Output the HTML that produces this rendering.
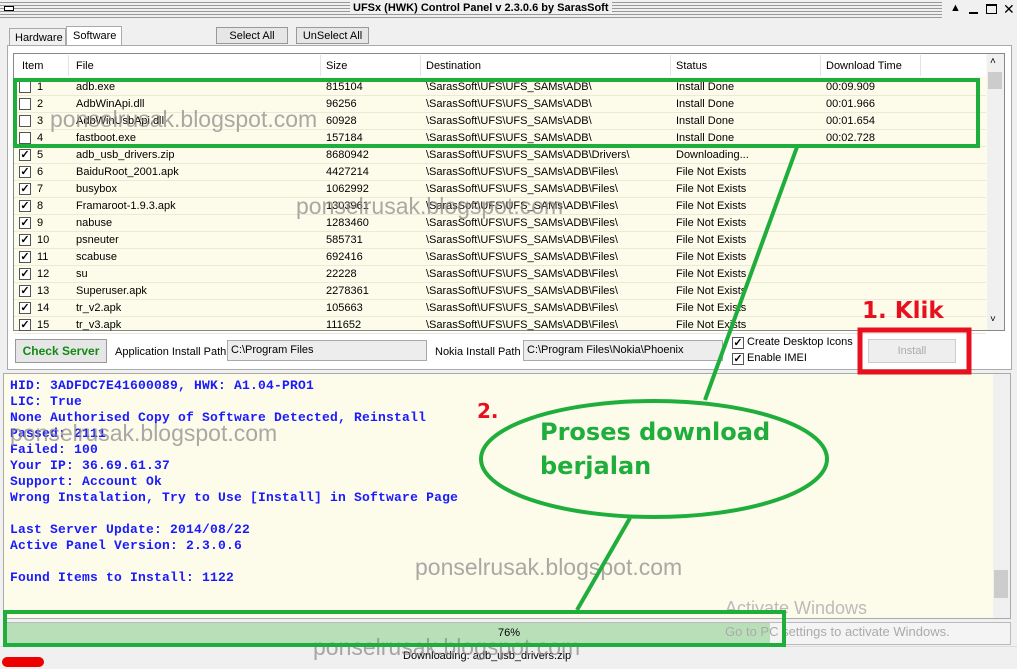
<!DOCTYPE html>
<html><head><meta charset="utf-8">
<style>
*{margin:0;padding:0;box-sizing:border-box}
body{width:1017px;height:669px;overflow:hidden;background:#f0f0f0;font-family:"Liberation Sans",sans-serif;font-size:11px;color:#000;position:relative}
.a{position:absolute;white-space:nowrap}
.cb{position:absolute;width:12px;height:12px;border:1px solid #555;background:#fff;font-size:11px;line-height:10px;text-align:center;font-weight:bold}
.btn{position:absolute;border:1px solid #999;background:#e6e6e6;text-align:center}
.log{position:absolute;left:10px;font-family:"Liberation Mono",monospace;font-weight:bold;font-size:13px;letter-spacing:0.2px;color:#1a1aff;white-space:pre}
.wm{position:absolute;color:rgba(140,140,140,.75);font-size:23px;font-family:"Liberation Sans",sans-serif;white-space:nowrap}
</style></head><body>
<div class="a" style="left:0;top:0;width:1017px;height:19px;background:repeating-linear-gradient(#f0f0f0 0 2px,#999 2px 3px);"></div>
<div class="a" style="left:4px;top:6px;width:10px;height:5px;border:1px solid #000;background:#fff"></div>
<div class="a" style="left:350px;top:2px;background:#f0f0f0;padding:0 3px;font-weight:bold;font-size:11px">UFSx (HWK) Control Panel v 2.3.0.6 by SarasSoft</div>
<div class="a" style="left:942px;top:0;width:75px;height:19px;background:#f0f0f0"></div>
<div class="a" style="left:950px;top:2px;font-size:11px">▲</div>
<div class="a" style="left:969px;top:12px;width:9px;height:2px;background:#000"></div>
<div class="a" style="left:986px;top:4px;width:11px;height:10px;border:1px solid #000;border-top-width:2px"></div>
<div class="a" style="left:1003px;top:1px;font-size:14px">✕</div>
<div class="a" style="left:9px;top:28px;width:57px;height:18px;border:1px solid #aaa;border-bottom:none;background:#f0f0f0;padding:3px 0 0 5px">Hardware</div>
<div class="a" style="left:66px;top:26px;width:56px;height:20px;border:1px solid #aaa;border-bottom:none;background:#fff;padding:3px 0 0 6px">Software</div>
<div class="btn" style="left:216px;top:27px;width:72px;height:17px;padding-top:2px">Select All</div>
<div class="btn" style="left:296px;top:27px;width:73px;height:17px;padding-top:2px">UnSelect All</div>
<div class="a" style="left:7px;top:45px;width:1005px;height:325px;border:1px solid #aaa;background:#fff"></div>
<div class="a" style="left:13px;top:53px;width:992px;height:278px;border:1px solid #888;background:#fdfbea"></div>
<div class="a" style="left:14px;top:54px;width:972px;height:23px;background:#fff"></div>
<div class="a" style="left:987px;top:54px;width:17px;height:276px;background:#f0f0f0"></div>
<div class="a" style="left:988px;top:72px;width:14px;height:17px;background:#ccc"></div>
<div class="a" style="left:990px;top:56px;font-size:10px">˄</div>
<div class="a" style="left:990px;top:314px;font-size:10px">˅</div>
<div id="hdr"></div>
<div id="rows"></div>
<div class="btn" style="left:15px;top:339px;width:92px;height:24px;padding-top:4px;color:#138a13;font-weight:bold;font-size:12px">Check Server</div>
<div class="a" style="left:115px;top:346px">Application Install Path</div>
<div class="a" style="left:227px;top:340px;width:200px;height:21px;border:1px solid #aaa;background:#ededed;padding:3px 3px">C:\Program Files</div>
<div class="a" style="left:435px;top:346px">Nokia Install Path</div>
<div class="a" style="left:523px;top:340px;width:200px;height:21px;border:1px solid #aaa;background:#ededed;padding:3px 3px">C:\Program Files\Nokia\Phoenix</div>
<div class="cb" style="left:732px;top:337px">✓</div><div class="a" style="left:747px;top:336px">Create Desktop Icons</div>
<div class="cb" style="left:732px;top:353px">✓</div><div class="a" style="left:747px;top:352px">Enable IMEI</div>
<div class="btn" style="left:868px;top:339px;width:88px;height:24px;padding-top:5px;color:#aaa;background:#eee;border-color:#ccc">Install</div>
<div class="a" style="left:3px;top:373px;width:1008px;height:246px;border:1px solid #aaa;background:#fdfbea"></div>
<div class="a" style="left:993px;top:374px;width:17px;height:244px;background:#f0f0f0"></div>
<div class="a" style="left:994px;top:570px;width:14px;height:28px;background:#ccc"></div>
<div class="log" style="top:378px;line-height:16px">HID: 3ADFDC7E41600089, HWK: A1.04-PRO1
LIC: True
None Authorised Copy of Software Detected, Reinstall
Passed: 2111
Failed: 100
Your IP: 36.69.61.37
Support: Account Ok
Wrong Instalation, Try to Use [Install] in Software Page

Last Server Update: 2014/08/22
Active Panel Version: 2.3.0.6

Found Items to Install: 1122</div>
<div class="a" style="left:3px;top:622px;width:1008px;height:23px;border:1px solid #bbb;background:#f4f4f4"></div>
<div class="a" style="left:4px;top:623px;width:766px;height:21px;background:#b9dfb9"></div>
<div class="a" style="left:498px;top:627px">76%</div>
<div class="a" style="left:0;top:646px;width:1017px;height:23px;background:#f0f0f0;border-top:1px solid #ddd"></div>
<div class="a" style="left:2px;top:657px;width:42px;height:10px;background:#e00;border-radius:5px"></div>
<div class="a" style="left:403px;top:650px">Downloading: adb_usb_drivers.zip</div>
<div class="a" style="left:725px;top:598px;font-size:18px;color:#bbb">Activate Windows</div>
<div class="a" style="left:725px;top:624px;font-size:13px;color:#aaa">Go to PC settings to activate Windows.</div>
<div class="wm" style="left:50px;top:106px">ponselrusak.blogspot.com</div>
<div class="wm" style="left:296px;top:193px">ponselrusak.blogspot.com</div>
<div class="wm" style="left:10px;top:420px">ponselrusak.blogspot.com</div>
<div class="wm" style="left:415px;top:554px">ponselrusak.blogspot.com</div>
<div class="wm" style="left:313px;top:634px">ponselrusak.blogspot.com</div>
<svg class="a" style="left:0;top:0" width="1017" height="669">
<rect x="15" y="80" width="963" height="66" fill="none" stroke="#1fae3c" stroke-width="4"/>
<rect x="5" y="612" width="779" height="33" fill="none" stroke="#1fae3c" stroke-width="4"/>
<rect x="860" y="330" width="109" height="42" fill="none" stroke="#e8101e" stroke-width="5"/>
<line x1="797" y1="147" x2="705" y2="400" stroke="#1fae3c" stroke-width="4"/>
<line x1="630" y1="518" x2="577" y2="610" stroke="#1fae3c" stroke-width="4"/>
<ellipse cx="654" cy="459" rx="173" ry="58" fill="none" stroke="#1fae3c" stroke-width="4"/>
<text x="540" y="440" font-family="DejaVu Sans" font-weight="bold" font-size="24" fill="#1fae3c">Proses download</text>
<text x="540" y="474" font-family="DejaVu Sans" font-weight="bold" font-size="24" fill="#1fae3c">berjalan</text>
<text x="477" y="418" font-family="DejaVu Sans" font-weight="bold" font-size="20" fill="#e8101e">2.</text>
<text x="862" y="318" font-family="DejaVu Sans" font-weight="bold" font-size="23" fill="#e8101e">1. Klik</text>
</svg>
<script>
var cols=[[22,"Item"],[76,"File"],[326,"Size"],[426,"Destination"],[676,"Status"],[826,"Download Time"]];
var h="";cols.forEach(function(c){h+='<div class="a" style="left:'+c[0]+'px;top:60px">'+c[1]+'</div>';});
[68,320,420,670,820,920].forEach(function(x){h+='<div class="a" style="left:'+x+'px;top:55px;width:1px;height:21px;background:#e4e4e4"></div>';});
document.getElementById("hdr").innerHTML=h;
var d=[["adb.exe","815104","\\SarasSoft\\UFS\\UFS_SAMs\\ADB\\","Install Done","00:09.909"],
["AdbWinApi.dll","96256","\\SarasSoft\\UFS\\UFS_SAMs\\ADB\\","Install Done","00:01.966"],
["AdbWinUsbApi.dll","60928","\\SarasSoft\\UFS\\UFS_SAMs\\ADB\\","Install Done","00:01.654"],
["fastboot.exe","157184","\\SarasSoft\\UFS\\UFS_SAMs\\ADB\\","Install Done","00:02.728"],
["adb_usb_drivers.zip","8680942","\\SarasSoft\\UFS\\UFS_SAMs\\ADB\\Drivers\\","Downloading...",""],
["BaiduRoot_2001.apk","4427214"],["busybox","1062992"],["Framaroot-1.9.3.apk","1303961"],["nabuse","1283460"],["psneuter","585731"],["scabuse","692416"],["su","22228"],["Superuser.apk","2278361"],["tr_v2.apk","105663"],["tr_v3.apk","111652"]];
var r="";d.forEach(function(e,i){var y=81+17*i;
if(e.length==2){e.push("\\SarasSoft\\UFS\\UFS_SAMs\\ADB\\Files\\","File Not Exists","");}
r+='<div class="cb" style="left:19px;top:'+(y)+'px">'+(i>=4?'✓':'')+'</div>';
r+='<div class="a" style="left:37px;top:'+y+'px">'+(i+1)+'</div>';
r+='<div class="a" style="left:76px;top:'+y+'px">'+e[0]+'</div>';
r+='<div class="a" style="left:326px;top:'+y+'px">'+e[1]+'</div>';
r+='<div class="a" style="left:426px;top:'+y+'px">'+e[2]+'</div>';
r+='<div class="a" style="left:676px;top:'+y+'px">'+e[3]+'</div>';
r+='<div class="a" style="left:826px;top:'+y+'px">'+e[4]+'</div>';
r+='<div class="a" style="left:14px;top:'+(y+14)+'px;width:972px;height:1px;background:#ece9d8"></div>';
});
document.getElementById("rows").innerHTML=r;
</script>
</body></html>
